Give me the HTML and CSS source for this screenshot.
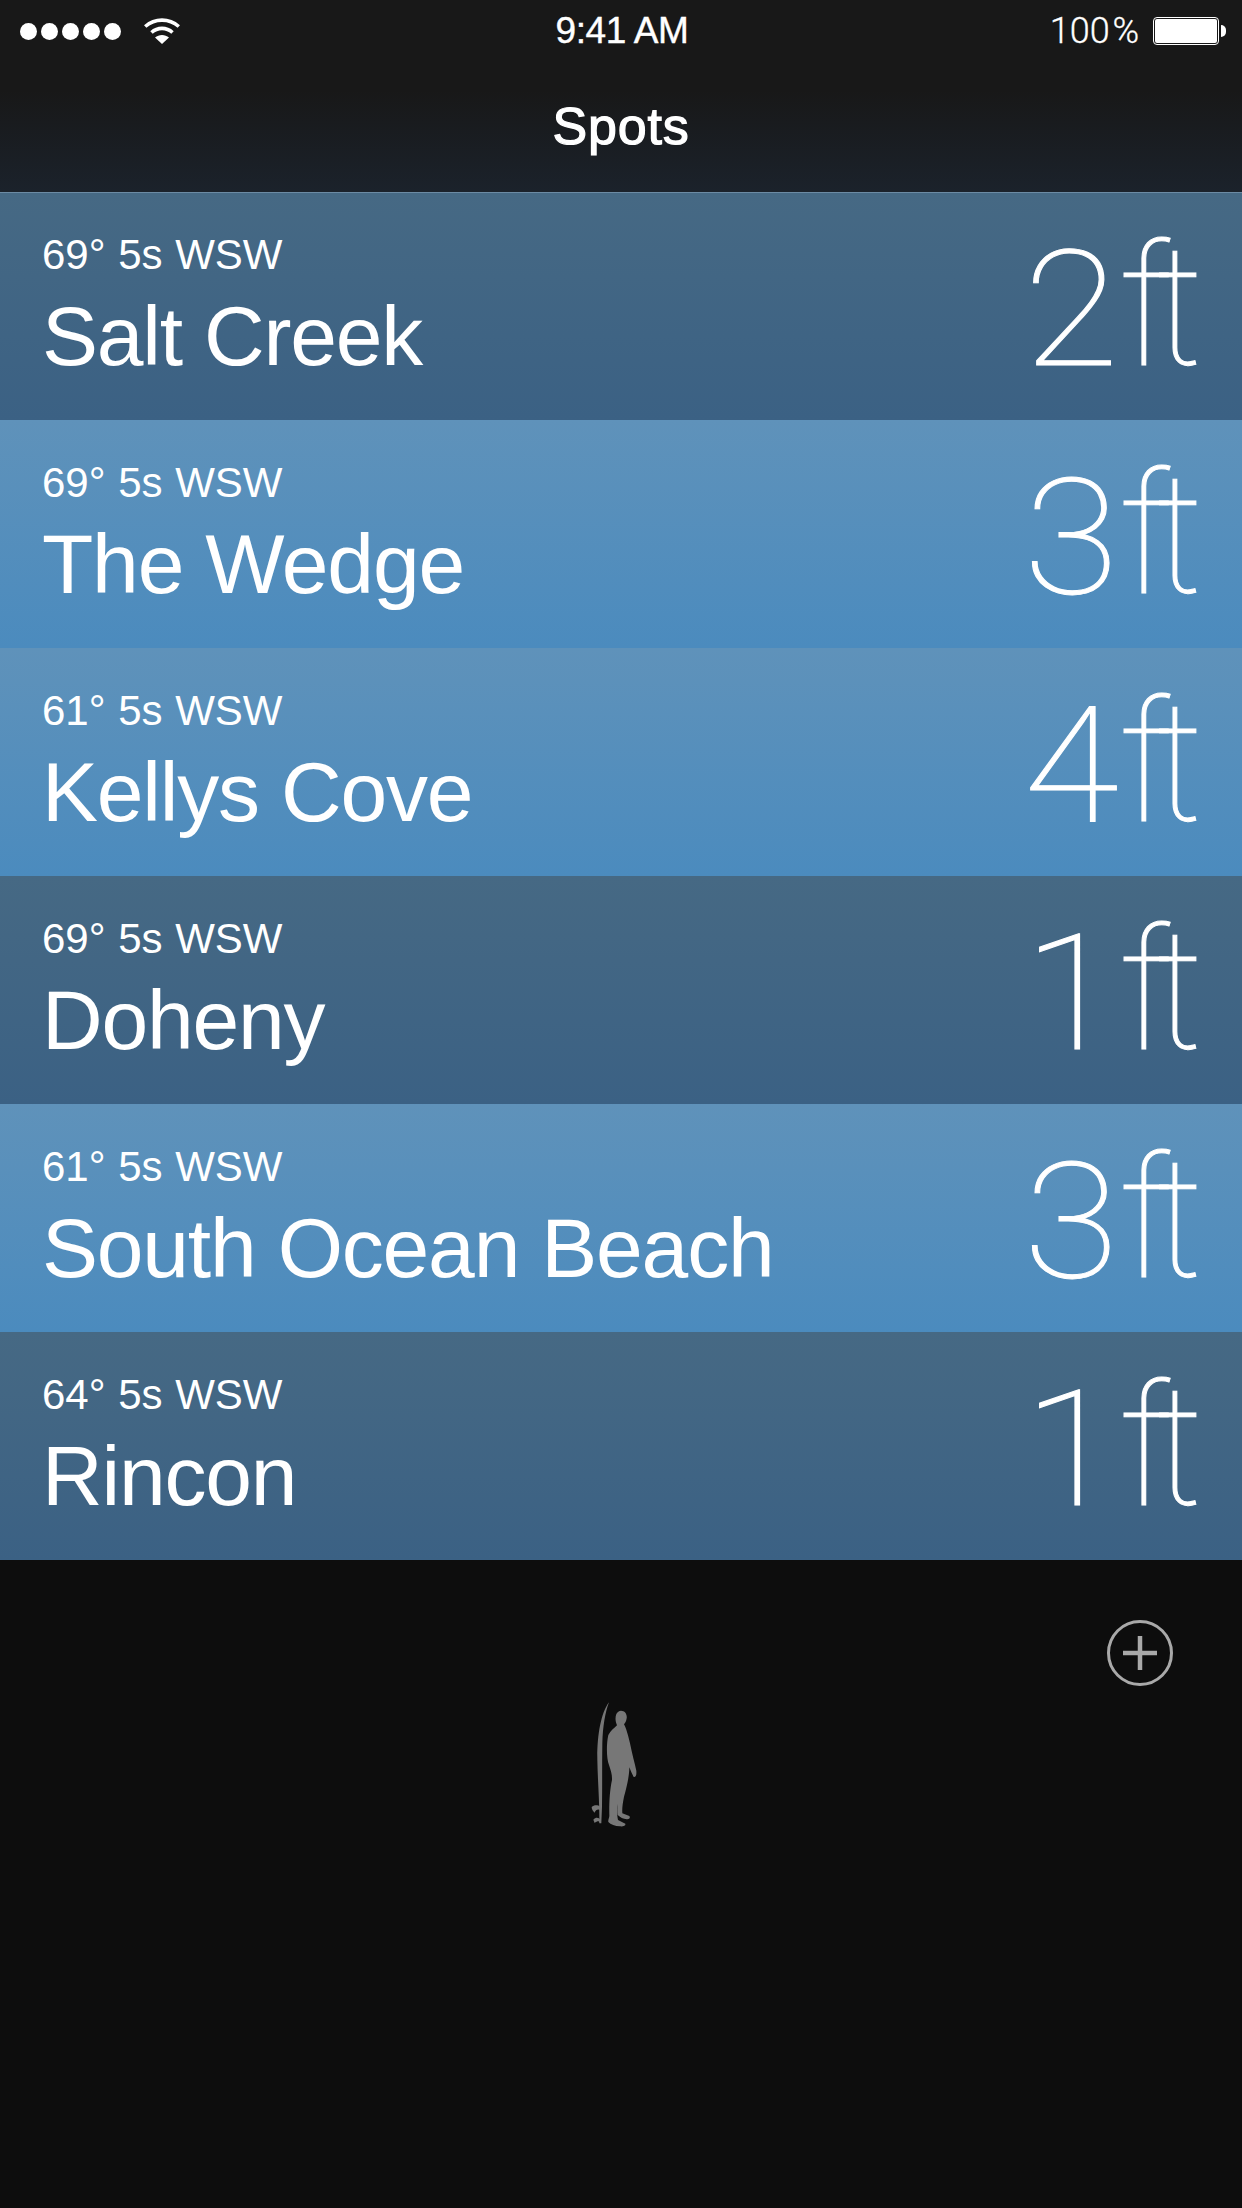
FILE: index.html
```html
<!DOCTYPE html>
<html lang="en">
<head>
  <meta charset="UTF-8">
  <title>Spots</title>
  <link rel="stylesheet" href="styles.css">
</head>
<body>

  <header class="top">
    <div class="status">
      <div class="status-left">
        <div class="signal"><i></i><i></i><i></i><i></i><i></i></div>
        <svg class="wifi" viewBox="0 0 36 27" width="36" height="27">
          <path d="M1.2 9.5C11 1 25 1 34.8 9.5" fill="none" stroke="#fff" stroke-width="3.6"/>
          <path d="M7.5 15.5C13.5 10 22.5 10 28.5 15.5" fill="none" stroke="#fff" stroke-width="3.6"/>
          <path d="M18 27L11 20.5C15 17 21 17 25 20.5Z" fill="#fff"/>
        </svg>
      </div>
      <div class="time">9:41 AM</div>
      <div class="status-right">
        <span class="percent">100 %</span>
        <div class="battery"><div class="battery-fill"></div></div>
        <div class="battery-nub"></div>
      </div>
    </div>
    <h1 class="title">Spots</h1>
  </header>

  <main>
    <div class="spot dark">
      <div><div class="conditions">69° 5s WSW</div><div class="name">Salt Creek</div></div>
      <div class="height"><span class="digit">2</span><span class="unit">ft</span></div>
    </div>
    <div class="spot light">
      <div><div class="conditions">69° 5s WSW</div><div class="name">The Wedge</div></div>
      <div class="height"><span class="digit">3</span><span class="unit">ft</span></div>
    </div>
    <div class="spot light">
      <div><div class="conditions">61° 5s WSW</div><div class="name">Kellys Cove</div></div>
      <div class="height"><span class="digit">4</span><span class="unit">ft</span></div>
    </div>
    <div class="spot dark">
      <div><div class="conditions">69° 5s WSW</div><div class="name">Doheny</div></div>
      <div class="height"><span class="digit">1</span><span class="unit">ft</span></div>
    </div>
    <div class="spot light">
      <div><div class="conditions">61° 5s WSW</div><div class="name">South Ocean Beach</div></div>
      <div class="height"><span class="digit">3</span><span class="unit">ft</span></div>
    </div>
    <div class="spot dark">
      <div><div class="conditions">64° 5s WSW</div><div class="name">Rincon</div></div>
      <div class="height"><span class="digit">1</span><span class="unit">ft</span></div>
    </div>
  </main>

  <footer class="bottom">
    <div class="add-row">
      <svg class="add" viewBox="0 0 66 66" width="66" height="66">
        <circle cx="33" cy="33" r="31.5" fill="none" stroke="#a9a9a9" stroke-width="3"/>
        <path d="M33 16V50M16 33H50" fill="none" stroke="#a9a9a9" stroke-width="4.5"/>
      </svg>
    </div>
    <svg class="surfer" viewBox="150 60 150 390" width="50" height="130">
      <path fill="#777" d="M243 92C255 92 262 103 260 115C259 124 255 130 252 133C258 143 264 165 270 190C276 220 284 250 289 272C290 285 288 292 281 291C276 282 272 272 268 262C268 285 262 315 252 350C248 370 246 385 247 400L268 408C272 413 268 419 260 418C250 417 240 412 233 405C231 395 232 385 232 372C230 385 231 405 234 420L256 431C258 437 250 440 240 439C225 438 212 434 205 426C204 420 207 415 208 408C207 375 209 330 216 300C217 285 212 270 207 255C199 235 199 190 205 165C212 152 222 145 231 136C226 125 225 112 229 102C232 96 237 92 243 92Z"/>
      <path fill="#777" d="M207 67C196 95 188 140 187 190C186 255 187 320 186 380L184 430L178 430C179 370 173 300 172 240C171 170 182 100 207 67Z"/>
      <path fill="#777" d="M155 381C162 374 173 374 181 380L181 390C173 386 167 390 164 398C159 394 155 388 155 381ZM160 419C168 410 176 412 182 420L181 430L176 424C172 424 167 426 164 429Z"/>
    </svg>
  </footer>

</body>
</html>
```

FILE: styles.css
```css
html, body { margin: 0; padding: 0; }
body {
  width: 1242px;
  height: 2208px;
  overflow: hidden;
  background: #0d0d0d;
  color: #fff;
  font-family: "Liberation Sans", Arial, sans-serif;
}

/* status bar + nav */
.top {
  height: 192px;
  box-sizing: border-box;
  background: linear-gradient(#181818 0, #181818 90px, #1b222b 192px);
}
.status {
  height: 60px;
  display: grid;
  grid-template-columns: 1fr auto 1fr;
  align-items: center;
  padding: 0 16px 0 20px;
}
.status-left { display: flex; align-items: center; gap: 23px; }
.signal { display: flex; gap: 4px; }
.signal i { width: 17px; height: 17px; border-radius: 50%; background: #fff; }
.wifi { display: block; margin-top: -1px; }
.time {
  font-size: 37px;
  letter-spacing: -0.4px;
  -webkit-text-stroke: 0.4px #fff;
  line-height: 62px;
  margin-left: -2px;
}
.status-right { display: flex; align-items: center; justify-content: flex-end; }
.percent {
  font-family: Roboto, sans-serif;
  font-weight: 300;
  font-size: 36px;
  word-spacing: -6px;
  -webkit-text-stroke: 0.3px #fff;
  margin-right: 14px;
}
.battery {
  width: 66px;
  height: 28px;
  box-sizing: border-box;
  border: 1px solid #fff;
  border-radius: 4px;
  padding: 1px;
}
.battery-fill { height: 100%; background: #fff; border-radius: 2px; }
.battery-nub {
  width: 5px;
  height: 12px;
  margin-left: 2px;
  background: #fff;
  border-radius: 0 6px 6px 0;
}
.title {
  margin: 0;
  text-align: center;
  font-size: 52px;
  font-weight: normal;
  letter-spacing: 0.8px;
  -webkit-text-stroke: 1.2px #fff;
  line-height: 132px;
  height: 132px;
}

/* spot rows */
.spot {
  height: 228px;
  box-sizing: border-box;
  display: flex;
  justify-content: space-between;
  padding: 35px 45px 0 42px;
}
.dark { background: linear-gradient(#466984, #3b6184); }
.light { background: linear-gradient(#5f92ba, #4b8bbe); }
.spot:first-child { border-top: 1px solid #6c8ba4; padding-top: 34px; }
.conditions { font-size: 42px; line-height: 56px; word-spacing: 1px; }
.name { font-size: 84px; line-height: 106px; letter-spacing: -1.2px; }
.height {
  display: flex;
  align-items: baseline;
  font-weight: 100;
  line-height: 228px;
  margin-top: -37px;
  -webkit-text-stroke: 1px #fff;
}
.digit {
  display: inline-block;
  font-family: Roboto, sans-serif;
  font-size: 162px;
  margin-right: 5px;
  font-variant-numeric: tabular-nums;
  transform: scaleX(1.07);
  transform-origin: right;
}
.unit {
  font-family: Inter, sans-serif;
  font-size: 168px;
  letter-spacing: -14px;
  padding-right: 12px;
}

/* below the list */
.bottom { display: flex; flex-direction: column; align-items: center; }
.add-row {
  align-self: stretch;
  display: flex;
  justify-content: flex-end;
  padding: 60px 69px 0 0;
}
.add { display: block; }
.surfer { display: block; margin-top: 14px; margin-left: -12px; }
```
